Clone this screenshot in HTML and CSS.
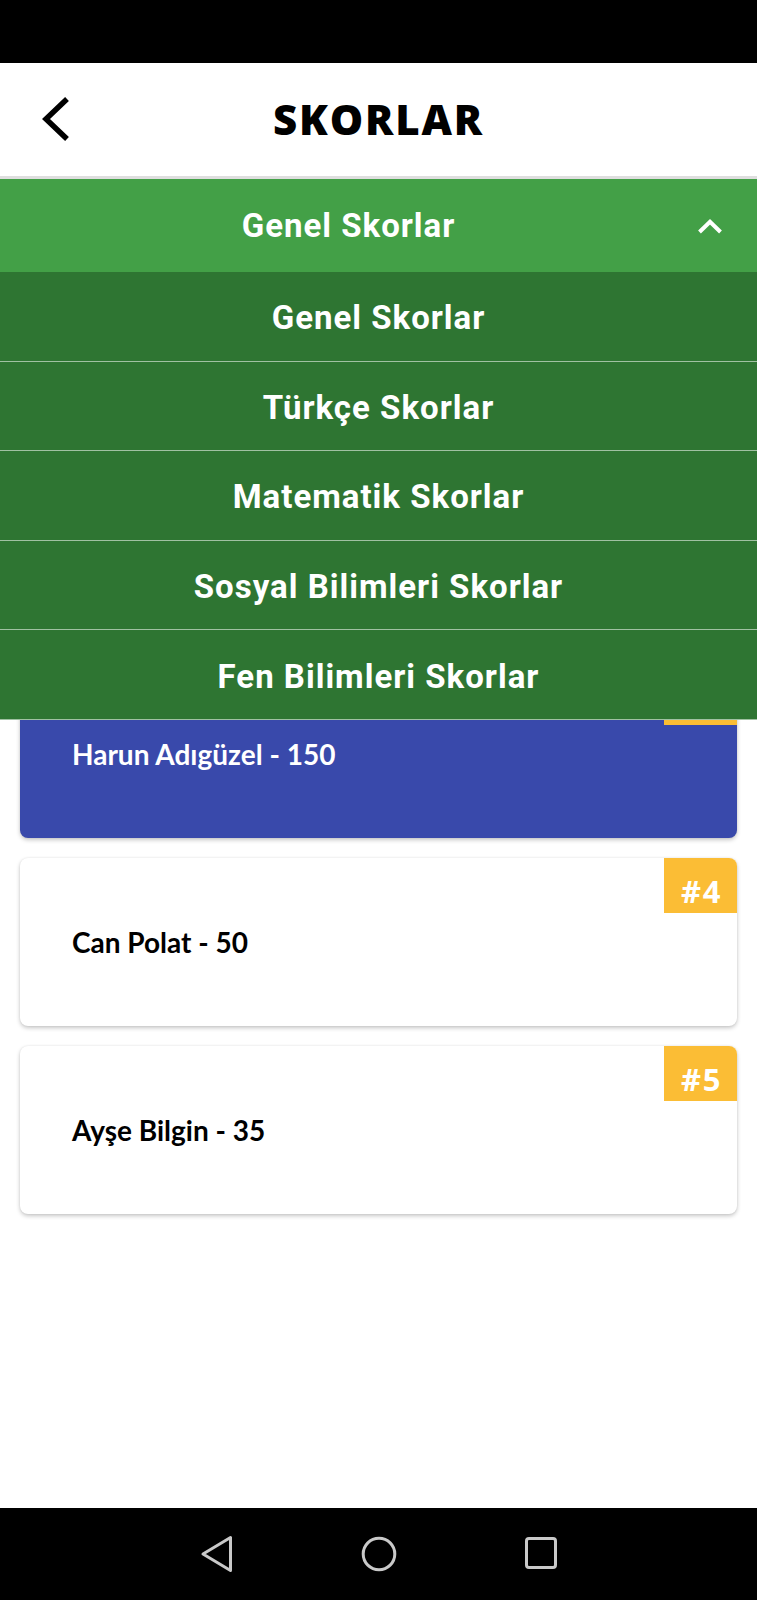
FILE: index.html
```html
<!DOCTYPE html>
<html lang="tr">
<head>
<meta charset="utf-8">
<title>Skorlar</title>
<link rel="stylesheet" href="styles.css">
</head>
<body>
<div class="screen">
  <div class="status-bar"></div>

  <header class="app-header">
    <div class="header-left">
      <svg class="back-icon" viewBox="0 0 30 46" width="30" height="46" aria-hidden="true">
        <polyline points="26,3 5,23 26,43" fill="none" stroke="#000" stroke-width="5.5" stroke-linejoin="miter"/>
      </svg>
    </div>
    <h1 class="title">SKORLAR</h1>
    <div class="header-right"></div>
  </header>

  <div class="select-wrap">
    <div class="select-bar">
      <span class="select-label">Genel Skorlar</span>
      <svg class="select-arrow" viewBox="0 0 26 15" width="26" height="15" aria-hidden="true">
        <polyline points="2.5,13 13,2.8 23.5,13" fill="none" stroke="#fff" stroke-width="4"/>
      </svg>
    </div>
    <ul class="dropdown">
      <li class="dropdown-item">Genel Skorlar</li>
      <li class="dropdown-item">Türkçe Skorlar</li>
      <li class="dropdown-item">Matematik Skorlar</li>
      <li class="dropdown-item">Sosyal Bilimleri Skorlar</li>
      <li class="dropdown-item">Fen Bilimleri Skorlar</li>
    </ul>
  </div>

  <main class="score-list">
    <div class="card">
      <span class="card-name">Mehmet Yılmaz - 250</span>
      <span class="badge">#1</span>
    </div>
    <div class="card">
      <span class="card-name">Zeynep Kaya - 200</span>
      <span class="badge">#2</span>
    </div>
    <div class="card card-active">
      <span class="card-name">Harun Adıgüzel - 150</span>
      <span class="badge">#3</span>
    </div>
    <div class="card">
      <span class="card-name">Can Polat - 50</span>
      <span class="badge">#4</span>
    </div>
    <div class="card">
      <span class="card-name">Ayşe Bilgin - 35</span>
      <span class="badge">#5</span>
    </div>
  </main>

  <nav class="nav-bar">
    <svg class="nav-icon" viewBox="0 0 34 38" width="34" height="38" aria-hidden="true">
      <path d="M30.5 2.5 L30.5 35.5 L3 19 Z" fill="none" stroke="#c9c9c9" stroke-width="3" stroke-linejoin="round"/>
    </svg>
    <svg class="nav-icon" viewBox="0 0 36 38" width="36" height="38" aria-hidden="true">
      <circle cx="18" cy="19" r="15.8" fill="none" stroke="#c9c9c9" stroke-width="3"/>
    </svg>
    <svg class="nav-icon" viewBox="0 0 34 38" width="34" height="38" aria-hidden="true">
      <rect x="2.5" y="3.5" width="29" height="29" rx="2.5" fill="none" stroke="#c9c9c9" stroke-width="3"/>
    </svg>
  </nav>
</div>
</body>
</html>
```

FILE: styles.css
```css
* {
  box-sizing: border-box;
}

html, body {
  margin: 0;
  padding: 0;
  background: #fff;
}

.screen {
  width: 757px;
  height: 1600px;
  display: flex;
  flex-direction: column;
  overflow: hidden;
  font-family: "Roboto", "Noto Sans", sans-serif;
}

.status-bar {
  height: 63px;
  background: #000;
  flex: none;
}

.app-header {
  height: 116px;
  flex: none;
  display: grid;
  grid-template-columns: 1fr auto 1fr;
  align-items: center;
  background: #fff;
  border-bottom: 3px solid #dedede;
  padding-bottom: 2px;
}

.header-left {
  display: flex;
  align-items: center;
  padding-left: 41px;
}

.back-icon {
  display: block;
}

.title {
  margin: 0;
  font-family: "Open Sans", sans-serif;
  font-weight: 800;
  font-size: 42px;
  letter-spacing: 1.8px;
  line-height: 1;
  color: #000;
}

.select-wrap {
  position: relative;
  flex: none;
  z-index: 2;
}

.select-bar {
  height: 93px;
  background: #43a047;
  display: flex;
  align-items: center;
  padding-right: 34px;
}

.select-label {
  flex: 1;
  text-align: center;
  color: #fff;
  font-weight: 700;
  font-size: 33px;
  letter-spacing: 1px;
}

.select-arrow {
  display: block;
  margin-top: 2px;
}

.dropdown {
  position: absolute;
  top: 100%;
  left: 0;
  right: 0;
  margin: 0;
  padding: 0;
  list-style: none;
  background: #2e7532;
}

.dropdown-item {
  height: 89.6px;
  display: flex;
  align-items: center;
  justify-content: center;
  color: #fff;
  font-weight: 700;
  font-size: 33px;
  letter-spacing: 1px;
  border-bottom: 1px solid rgba(255, 255, 255, 0.55);
  padding-top: 3px;
}

.score-list {
  flex: 1;
  display: flex;
  flex-direction: column;
  gap: 20px;
  padding: 22px 20px 0;
}

.card {
  position: relative;
  height: 168px;
  background: #fff;
  border-radius: 8px;
  box-shadow: 0 2px 4px rgba(0, 0, 0, 0.22), 0 0 2px rgba(0, 0, 0, 0.08);
  display: flex;
  align-items: center;
  padding-left: 52px;
  overflow: hidden;
}

.card-active {
  background: #3949ab;
}

.card-name {
  font-family: "Lato", sans-serif;
  font-weight: 700;
  font-size: 28px;
  color: #000;
}

.card-active .card-name {
  color: #fff;
}

.badge {
  position: absolute;
  top: 0;
  right: 0;
  width: 73px;
  height: 55px;
  background: #fbbd35;
  color: #fff;
  font-family: "Open Sans", sans-serif;
  font-weight: 700;
  font-size: 31px;
  letter-spacing: 1.5px;
  line-height: 1;
  text-align: center;
  padding-top: 18px;
  padding-left: 2px;
}

.nav-bar {
  height: 92px;
  flex: none;
  background: #000;
  display: flex;
  align-items: center;
  justify-content: center;
  gap: 127px;
}

.nav-icon {
  display: block;
}
```
